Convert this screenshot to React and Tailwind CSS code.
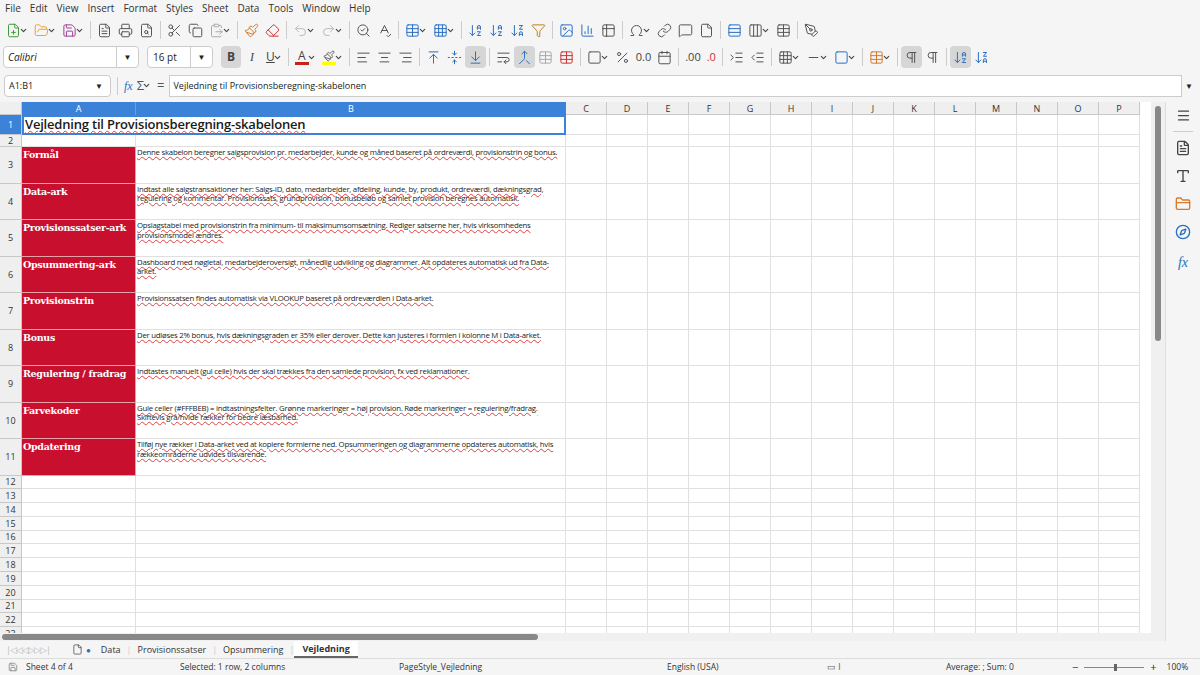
import React from "react";
import {
  FilePlus, FolderOpen, Save, FileText, Printer, FileSearch, Scissors, Copy, ClipboardPaste, Paintbrush, Eraser,
  Undo2, Redo2, SearchCheck, SpellCheck, Table, Grid3x3, ArrowDownAZ, ArrowDownZA, Filter, Image, BarChart3, Table2,
  Omega, Link, MessageSquare, File, Rows3, Columns3, PenTool, AlignLeft, AlignCenter, AlignRight, ArrowUpToLine,
  FoldVertical, ArrowDownToLine, WrapText, Merge, Percent, Calendar, IndentIncrease, IndentDecrease, Square,
  Minus, Pilcrow, Menu, Type, FolderClosed, Compass, ChevronDown, Save as SaveIcon
} from "lucide-react";

const C = "#555";
const Dd = () => <ChevronDown size={9} strokeWidth={3} color="#444" className="-ml-0.5" />;
const I = ({ Ic, color = C, dd, active }) => (
  <div className={`flex items-center h-[22px] px-[3px] rounded ${active ? "bg-[#d6d6d6]" : ""}`}>
    <Ic size={15} color={color} strokeWidth={1.6} />
    {dd && <Dd />}
  </div>
);
const Sep = () => <div className="w-px h-[18px] bg-[#ccc] mx-[3px]" />;

const cols = ["C","D","E","F","G","H","I","J","K","L","M","N","O","P"];
const rows = [
  ["Formål", "Denne skabelon beregner salgsprovision pr. medarbejder, kunde og måned baseret på ordreværdi, provisionstrin og bonus."],
  ["Data-ark", "Indtast alle salgstransaktioner her: Salgs-ID, dato, medarbejder, afdeling, kunde, by, produkt, ordreværdi, dækningsgrad, regulering og kommentar. Provisionssats, grundprovision, bonusbeløb og samlet provision beregnes automatisk."],
  ["Provisionssatser-ark", "Opslagstabel med provisionstrin fra minimum- til maksimumsomsætning. Rediger satserne her, hvis virksomhedens provisionsmodel ændres."],
  ["Opsummering-ark", "Dashboard med nøgletal, medarbejderoversigt, månedlig udvikling og diagrammer. Alt opdateres automatisk ud fra Data-arket."],
  ["Provisionstrin", "Provisionssatsen findes automatisk via VLOOKUP baseret på ordreværdien i Data-arket."],
  ["Bonus", "Der udløses 2% bonus, hvis dækningsgraden er 35% eller derover. Dette kan justeres i formlen i kolonne M i Data-arket."],
  ["Regulering / fradrag", "Indtastes manuelt (gul celle) hvis der skal trækkes fra den samlede provision, fx ved reklamationer."],
  ["Farvekoder", "Gule celler (#FFFBEB) = indtastningsfelter. Grønne markeringer = høj provision. Røde markeringer = regulering/fradrag. Skiftevis grå/hvide rækker for bedre læsbarhed."],
  ["Opdatering", "Tilføj nye rækker i Data-arket ved at kopiere formlerne ned. Opsummeringen og diagrammerne opdateres automatisk, hvis rækkeområderne udvides tilsvarende."],
];

const RH = ({ n, h, sel }) => (
  <div className={`w-[22px] shrink-0 border-r border-b border-[#c8c8c8] flex items-center justify-center text-[9px] ${sel ? "bg-[#3c82d8] text-white" : "bg-[#efefef] text-[#333]"}`} style={{ height: h }}>{n}</div>
);
const Rest = () => (
  <>
    {cols.map(c => <div key={c} className="w-[41px] shrink-0 border-r border-b border-[#e0e0e0]" />)}
  </>
);

export default function App() {
  const font = { fontFamily: "'Open Sans','Liberation Sans',sans-serif" };
  return (
    <div className="w-[1200px] h-[675px] bg-[#f5f5f5] flex flex-col overflow-hidden text-[#222]" style={font}>
      <div className="h-[17px] flex items-center gap-[9px] px-[5px] text-[10px] text-[#333]">
        {["File","Edit","View","Insert","Format","Styles","Sheet","Data","Tools","Window","Help"].map(m => <span key={m}>{m}</span>)}
      </div>
      <div className="h-[26px] flex items-center px-[3px]">
        <I Ic={FilePlus} color="#3a9c3a" dd /><I Ic={FolderOpen} color="#e9a23b" dd /><I Ic={Save} color="#a23d9a" dd /><Sep />
        <I Ic={FileText} /><I Ic={Printer} /><I Ic={FileSearch} /><Sep />
        <I Ic={Scissors} /><I Ic={Copy} /><I Ic={ClipboardPaste} color="#aaa" dd /><Sep />
        <I Ic={Paintbrush} color="#d77a2b" /><I Ic={Eraser} color="#c33" /><Sep />
        <I Ic={Undo2} color="#bbb" dd /><I Ic={Redo2} color="#bbb" dd /><Sep />
        <I Ic={SearchCheck} /><I Ic={SpellCheck} /><Sep />
        <I Ic={Table} color="#2a6fc0" dd /><I Ic={Grid3x3} color="#2a6fc0" dd /><Sep />
        <I Ic={ArrowDownAZ} color="#2a6fc0" /><I Ic={ArrowDownAZ} color="#2a6fc0" /><I Ic={ArrowDownZA} color="#2a6fc0" /><I Ic={Filter} color="#c08020" /><Sep />
        <I Ic={Image} color="#2a6fc0" /><I Ic={BarChart3} color="#2a6fc0" /><I Ic={Table2} /><Sep />
        <I Ic={Omega} dd /><I Ic={Link} /><I Ic={MessageSquare} /><I Ic={File} /><Sep />
        <I Ic={Rows3} color="#2a6fc0" /><I Ic={Columns3} dd /><I Ic={Table} /><Sep /><I Ic={PenTool} />
      </div>
      <div className="h-[28px] flex items-center px-[3px]">
        <div className="w-[136px] h-[22px] bg-white border border-[#ccc] rounded flex items-center justify-between pl-[4px] text-[10px] italic">Calibri<div className="w-[22px] h-full border-l border-[#ccc] flex items-center justify-center not-italic text-[8px]">▼</div></div>
        <div className="w-[66px] h-[22px] ml-[8px] bg-white border border-[#ccc] rounded flex items-center justify-between pl-[5px] text-[10px]">16 pt<div className="w-[22px] h-full border-l border-[#ccc] flex items-center justify-center text-[8px]">▼</div></div>
        <div className="ml-[8px] w-[20px] h-[22px] rounded bg-[#d6d6d6] flex items-center justify-center text-[12px] font-bold text-[#444]">B</div>
        <div className="w-[22px] text-center text-[12px] italic text-[#444]" style={{ fontFamily: "'Liberation Serif',serif" }}>I</div>
        <div className="flex items-center text-[12px] underline text-[#444] px-[3px]">U<Dd /></div><Sep />
        <div className="flex items-center px-[3px]"><div className="flex flex-col items-center"><span className="text-[12px] leading-[12px] text-[#444]">A</span><div className="w-[14px] h-[3px] bg-[#c9211e]" /></div><Dd /></div>
        <div className="flex items-center px-[3px]"><div className="flex flex-col items-center"><Paintbrush size={12} color="#666" /><div className="w-[14px] h-[3px] bg-[#ffff00]" /></div><Dd /></div><Sep />
        <I Ic={AlignLeft} /><I Ic={AlignCenter} /><I Ic={AlignRight} /><Sep />
        <I Ic={ArrowUpToLine} color="#2a6fc0" /><I Ic={FoldVertical} color="#2a6fc0" /><I Ic={ArrowDownToLine} color="#2a6fc0" active /><Sep />
        <I Ic={WrapText} /><I Ic={Merge} color="#2a6fc0" active /><I Ic={Table} color="#aaa" /><I Ic={Table} color="#c33" /><Sep />
        <I Ic={Square} dd /><I Ic={Percent} /><span className="text-[11px] text-[#444] px-[3px]">0.0</span><I Ic={Calendar} /><Sep />
        <span className="text-[11px] text-[#444] px-[3px]">.00</span><span className="text-[11px] text-[#c33] px-[3px]">.0</span><Sep />
        <I Ic={IndentIncrease} /><I Ic={IndentDecrease} /><Sep />
        <I Ic={Grid3x3} dd /><I Ic={Minus} dd /><I Ic={Square} color="#2a6fc0" dd /><Sep />
        <I Ic={Table} color="#d77a2b" dd /><Sep />
        <I Ic={Pilcrow} active /><I Ic={Pilcrow} /><Sep /><I Ic={ArrowDownAZ} color="#2a6fc0" active /><I Ic={ArrowDownZA} color="#2a6fc0" />
      </div>
      <div className="h-[27px] flex items-center px-[4px] mt-[1px]">
        <div className="w-[107px] h-[22px] bg-white border border-[#ccc] rounded flex items-center justify-between pl-[4px] text-[9px]">A1:B1<div className="w-[22px] h-full flex items-center justify-center text-[8px]">▼</div></div>
        <div className="w-px h-[18px] bg-[#ccc] mx-[6px]" />
        <span className="text-[12px] italic text-[#2a6fc0]" style={{ fontFamily: "'Liberation Serif',serif" }}>fx</span>
        <span className="text-[13px] text-[#555] ml-[4px]">Σ</span><Dd />
        <span className="text-[13px] text-[#555] ml-[6px]">=</span>
        <div className="flex-1 ml-[5px] h-[22px] bg-white border border-[#ccc] flex items-center px-[3px] text-[9px]">Vejledning til Provisionsberegning-skabelonen</div>
        <div className="w-[14px] text-[8px] text-center">▼</div>
      </div>
      <div className="flex flex-1 min-h-0 mt-[3px]">
        <div className="flex-1 flex flex-col min-w-0">
          <div className="flex flex-1 min-h-0">
            <div className="flex-1 bg-white overflow-hidden flex flex-col">
              <div className="flex h-[13px] text-[9px] shrink-0">
                <div className="w-[22px] shrink-0 bg-[#efefef] border-r border-b border-[#c8c8c8]" />
                <div className="w-[114px] shrink-0 bg-[#3c82d8] text-white text-center border-r border-[#6a9ee0]">A</div>
                <div className="w-[430px] shrink-0 bg-[#3c82d8] text-white text-center">B</div>
                {cols.map(c => <div key={c} className="w-[41px] shrink-0 bg-[#efefef] text-center text-[#333] border-r border-b border-[#c8c8c8]">{c}</div>)}
              </div>
              <div className="flex h-[20px] shrink-0">
                <RH n={1} h={20} sel />
                <div className="w-[544px] shrink-0 border-2 border-[#3c82d8] flex items-center px-[1px] text-[13px] font-semibold text-[#1a1a1a] tracking-[-0.2px] underline decoration-wavy decoration-[#e04040] decoration-1">Vejledning til Provisionsberegning-skabelonen</div>
                <Rest />
              </div>
              <div className="flex h-[12px] shrink-0"><RH n={2} h={12} /><div className="w-[114px] shrink-0 border-r border-b border-[#e0e0e0]" /><div className="w-[430px] shrink-0 border-r border-b border-[#e0e0e0]" /><Rest /></div>
              {rows.map(([a, b], i) => (
                <div key={i} className="flex h-[36.5px] shrink-0">
                  <RH n={i + 3} h={36.5} />
                  <div className="w-[114px] shrink-0 bg-[#c8102e] border-r border-b border-[#e8a0a8] px-[1px] pt-[2px] text-white font-bold text-[9.5px] leading-[12px] whitespace-nowrap overflow-hidden" style={{ fontFamily: "'DejaVu Serif',serif", letterSpacing: "-0.3px" }}>{a}</div>
                  <div className="w-[430px] shrink-0 border-r border-b border-[#e0e0e0] px-[1px] pt-[1px] text-[7.8px] leading-[9.5px] tracking-[-0.25px] underline decoration-wavy decoration-[#e04040] decoration-1">{b}</div>
                  <Rest />
                </div>
              ))}
              {Array.from({ length: 12 }, (_, k) => (
                <div key={k} className="flex h-[13.8px] shrink-0">
                  <RH n={12 + k} h={13.8} />
                  <div className="w-[114px] shrink-0 border-r border-b border-[#e0e0e0]" />
                  <div className="w-[430px] shrink-0 border-r border-b border-[#e0e0e0]" />
                  <Rest />
                </div>
              ))}
            </div>
            <div className="w-[14px] bg-[#f0f0f0] flex justify-center pt-[4px]"><div className="w-[6px] h-[235px] bg-[#888] rounded" /></div>
          </div>
          <div className="h-[8px] bg-[#f0f0f0] flex items-center px-[2px]"><div className="w-[536px] h-[6px] bg-[#888] rounded" /></div>
        </div>
        <div className="w-[35px] border-l border-[#ddd] flex flex-col items-center pt-[6px] gap-[12px]">
          <Menu size={15} color="#444" />
          <div className="w-[20px] h-px bg-[#ccc] -my-[4px]" />
          <FileText size={16} color="#444" /><Type size={16} color="#444" /><FolderClosed size={16} color="#d77a2b" /><Compass size={16} color="#2a6fc0" />
          <span className="text-[14px] italic text-[#2a6fc0]" style={{ fontFamily: "'Liberation Serif',serif" }}>fx</span>
        </div>
      </div>
      <div className="h-[17px] flex items-center text-[9px] text-[#333]">
        <div className="w-[68px] text-[#bbb] text-[9px] pl-[6px] tracking-[-1px] whitespace-nowrap overflow-hidden">|◁◁◁▷▷▷|</div>
        <div className="flex items-center px-[4px]"><File size={11} color="#666" /><span className="text-[#2a6fc0] ml-[3px] text-[8px]">●</span></div>
        <span className="px-[6px]">Data</span><span className="text-[#ccc]">|</span>
        <span className="px-[6px]">Provisionssatser</span><span className="text-[#ccc]">|</span>
        <span className="px-[6px]">Opsummering</span><span className="text-[#ccc]">|</span>
        <span className="px-[8px] font-bold border-b-2 border-[#666] bg-white h-full flex items-center">Vejledning</span>
      </div>
      <div className="h-[17px] flex items-center text-[8.5px] text-[#333] border-t border-[#ddd]">
        <div className="w-[26px] flex justify-center"><SaveIcon size={10} color="#888" /></div>
        <span className="w-[154px]">Sheet 4 of 4</span>
        <span className="w-[219px]">Selected: 1 row, 2 columns</span>
        <span className="w-[268px]">PageStyle_Vejledning</span>
        <span className="w-[160px]">English (USA)</span>
        <span className="w-[119px] text-[#555]">▭ I</span>
        <span className="w-[126px]">Average: ; Sum: 0</span>
        <span className="text-[11px]">−</span>
        <div className="w-[60px] h-px bg-[#888] mx-[6px] relative"><div className="absolute left-[30px] -top-[3px] w-[3px] h-[7px] bg-[#666]" /></div>
        <span className="text-[11px]">+</span>
        <span className="ml-[10px]">100%</span>
      </div>
    </div>
  );
}
